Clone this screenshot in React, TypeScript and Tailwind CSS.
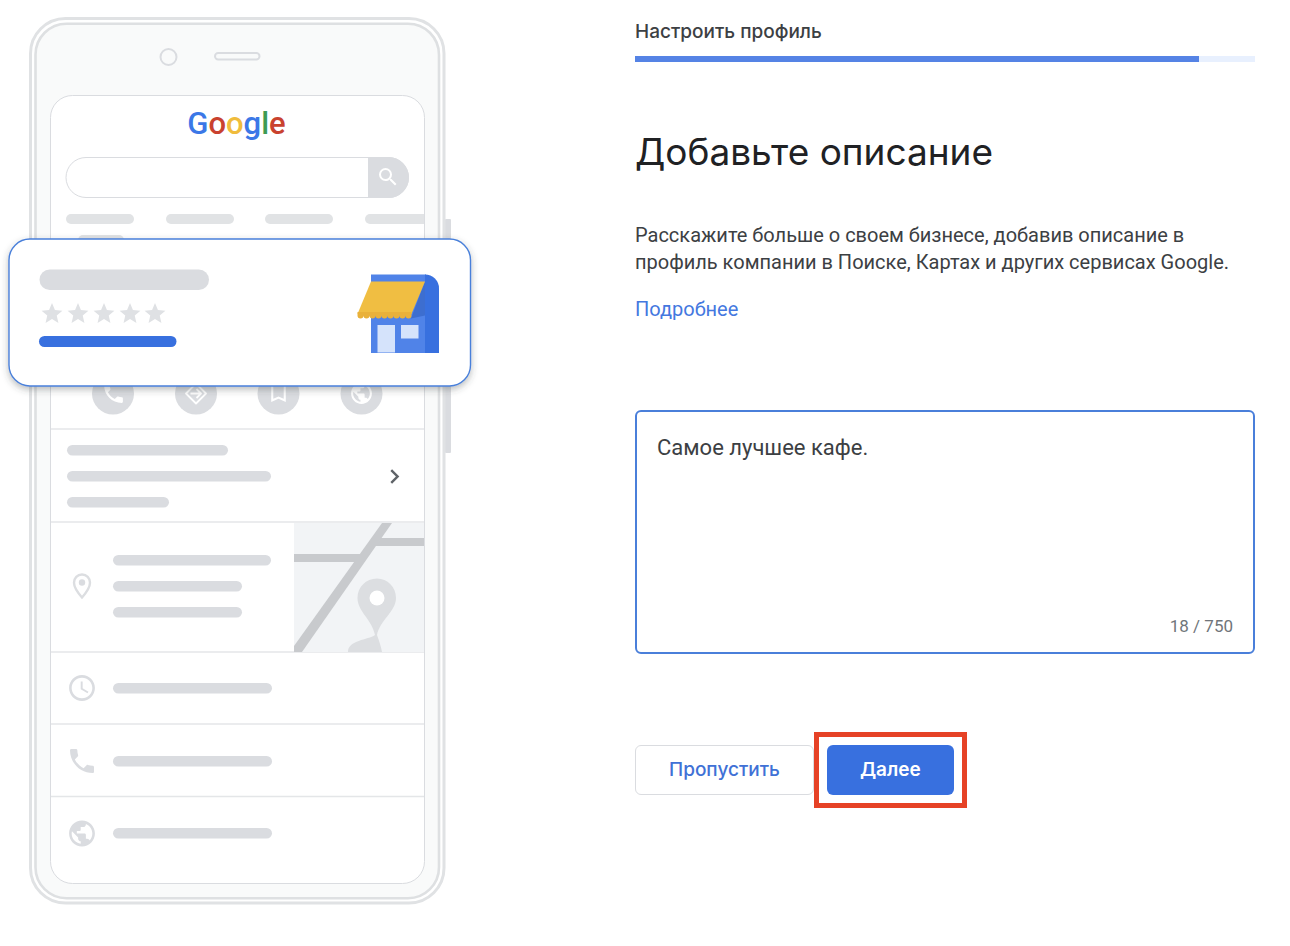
import { useState } from "react";
import {
    MdAccessTime,
    MdBookmarkBorder,
    MdChevronRight,
    MdPhone,
    MdPublic,
    MdSearch,
    MdStar,
} from "react-icons/md";

const MAX_LENGTH = 750;

// Placeholder lines on the phone screen
const lines = [
    { x: 67, y: 445, width: 161 },
    { x: 67, y: 471, width: 204 },
    { x: 67, y: 497, width: 102 },
    { x: 113, y: 555, width: 158 },
    { x: 113, y: 581, width: 129 },
    { x: 113, y: 607, width: 129 },
    { x: 113, y: 683, width: 159 },
    { x: 113, y: 756, width: 159 },
    { x: 113, y: 828, width: 159 },
];

const PhoneIllustration = () => (
    <svg viewBox="0 0 480 920" className="w-full" aria-hidden="true">
        <defs>
            <clipPath id="screen">
                <rect x="51" y="96" width="373" height="787" rx="22" />
            </clipPath>
            <filter id="shadow" x="-10%" y="-20%" width="120%" height="150%">
                <feDropShadow dx="0" dy="3" stdDeviation="3.5" floodColor="#3c4043" floodOpacity="0.35" />
            </filter>
        </defs>

        {/* Phone body */}
        <rect x="445" y="219" width="6" height="234" rx="1" fill="#dadce0" />
        <rect x="30.5" y="18.5" width="413.5" height="884.5" rx="35" fill="#fff" stroke="#e0e2e4" strokeWidth="3" />
        <rect x="35.5" y="23.7" width="403.5" height="874.5" rx="31" fill="#f9fafa" stroke="#dee0e2" strokeWidth="2.6" />
        <circle cx="168.5" cy="57" r="8" fill="none" stroke="#dadce0" strokeWidth="2" />
        <rect x="215" y="53" width="44.5" height="6.5" rx="3.2" fill="none" stroke="#dadce0" strokeWidth="2" />
        <rect x="50.5" y="95.5" width="374" height="788" rx="22" fill="#fff" stroke="#dadce0" />

        {/* Search */}
        <text
            x="236.5"
            y="134"
            textAnchor="middle"
            fontSize="31"
            fontWeight="500"
            fontFamily="Roboto, sans-serif"
        >
            <tspan fill="#3b78e7">G</tspan>
            <tspan fill="#c9422f">o</tspan>
            <tspan fill="#f0bc3c">o</tspan>
            <tspan fill="#3b78e7">g</tspan>
            <tspan fill="#3e9b54">l</tspan>
            <tspan fill="#c9422f">e</tspan>
        </text>
        <rect x="66" y="157.5" width="342.5" height="40" rx="20" fill="#fff" stroke="#dadce0" />
        <path d="M368 157h20.5a20.5 20.5 0 0 1 0 41H368z" fill="#dadce0" />
        <MdSearch x="376" y="165" size={24} color="#fff" />

        <g clipPath="url(#screen)">
            {[66, 166, 265, 365].map((x) => (
                <rect key={x} x={x} y="214" width="68" height="10" rx="5" fill="#e1e3e5" />
            ))}
            <rect x="78" y="235" width="46" height="10" rx="5" fill="#e1e3e5" />

            {/* Quick actions */}
            {[113, 196, 278.5, 361.5].map((cx) => (
                <circle key={cx} cx={cx} cy="393.5" r="21" fill="#dadce0" />
            ))}
            <MdPhone x="101" y="381" size={25} color="#fff" />
            <g fill="none" stroke="#fff" strokeWidth="1.8" strokeLinejoin="round">
                <path d="M196 383.5l10 10-10 10-10-10z" />
                <path d="M190.5 393.5h10M196.500 389l4.500 4.500-4.500 4.500" />
            </g>
            <MdBookmarkBorder x="266" y="380" size={25} color="#fff" />
            <MdPublic x="349" y="381" size={25} color="#fff" />

            {[429, 522, 652, 724, 796.5].map((y) => (
                <line key={y} x1="51" x2="424" y1={y} y2={y} stroke="#e4e6e8" strokeWidth="1.6" />
            ))}
            {lines.map((line) => (
                <rect key={line.y} {...line} height="10.6" rx="5.3" fill="#dadce0" />
            ))}

            {/* Map */}
            <rect x="294" y="523" width="130" height="129" fill="#f2f4f6" />
            <g fill="#c8cacd">
                <path d="M382 523h10L302 652h-8v-6z" />
                <path d="M294 554h69l-6 8h-63zM381 538h43v8h-49z" />
            </g>
            <path
                fill="#dcdee1"
                d="M377 578.5c-11 0-19.5 8.5-19.5 19.5 0 13.5 14.5 21.5 17.5 37-7 5-27 5-27 17h34c-1-6-3-11-5-17 3-15 19-23.5 19-37 0-11-8.5-19.5-19-19.5z"
            />
            <circle cx="377" cy="598" r="7.5" fill="#fff" />
        </g>

        <MdChevronRight x="380" y="462" size={29} color="#5f6368" />
        <path
            d="M82 574.5c-4.600 0-8 3.500-8 8.200 0 5.300 5 11.300 8 14.800 3-3.500 8-9.500 8-14.800 0-4.700-3.400-8.200-8-8.200z"
            fill="none"
            stroke="#dcdee1"
            strokeWidth="2.4"
        />
        <circle cx="82" cy="582.5" r="3.2" fill="#dadce0" />
        <MdAccessTime x="66.5" y="672.5" size={31} color="#dadce0" />
        <MdPhone x="66" y="745" size={32} color="#dadce0" />
        <MdPublic x="66.5" y="818" size={31} color="#dadce0" />

        {/* Business card */}
        <rect x="9" y="239" width="461.5" height="147" rx="21" fill="#fff" stroke="#4a80da" strokeWidth="1.4" filter="url(#shadow)" />
        <rect x="39.5" y="269.5" width="169.5" height="20.5" rx="10.2" fill="#dadce0" />
        {[52, 78, 104, 130, 155].map((cx) => (
            <MdStar key={cx} x={cx - 12.5} y={301} size={25} color="#dfe1e4" />
        ))}
        <rect x="39" y="336" width="137.5" height="11" rx="5.5" fill="#3870df" />

        {/* Store */}
        <path d="M371 274.5h55V353h-55z" fill="#5083e8" />
        <path d="M425 274.5a14 14 0 0 1 14 14V353h-14z" fill="#3870df" />
        <path d="M425 281.5v34l-14 3z" fill="#3d6ed0" />
        <path d="M377.5 325H395v27.5h-17.5zM401 325h17.5v13.5H401z" fill="#d5e3fb" />
        <path d="M371 281.5h54L411.5 314h-54z" fill="#f0be42" />
        <path
            d="M357.5 312h54v3.500a3 3 0 0 1-6 0a3 3 0 0 1-6 0a3 3 0 0 1-6 0a3 3 0 0 1-6 0a3 3 0 0 1-6 0a3 3 0 0 1-6 0a3 3 0 0 1-6 0a3 3 0 0 1-6 0a3 3 0 0 1-6 0z"
            fill="#e9b13a"
        />
    </svg>
);

const App = () => {
    const [description, setDescription] = useState("Самое лучшее кафе.");

    return (
        <div className="flex min-h-screen flex-col bg-white font-[Roboto,sans-serif] text-[#3c4043] lg:flex-row">
            <div className="w-full max-w-[480px] shrink-0">
                <PhoneIllustration />
            </div>

            <main className="min-w-0 flex-1 px-9 pt-4 lg:pr-[35px] lg:pl-[155px]">
                {/* Progress */}
                <p id="step" className="font-[Inter,sans-serif] text-[19px] leading-8 font-medium">
                    Настроить профиль
                </p>
                <div
                    role="progressbar"
                    aria-labelledby="step"
                    aria-valuenow={91}
                    className="mt-2 h-1.5 bg-[#e8f0fe]"
                >
                    <div className="h-full w-[91%] bg-[#5583e5]" />
                </div>

                <h1 className="mt-16 font-[Inter,sans-serif] text-[37px] leading-[52px] text-[#202124]">
                    Добавьте описание
                </h1>
                <p className="mt-11 text-xl leading-[27px]">
                    Расскажите больше о своем бизнесе, добавив описание в профиль компании в Поиске, Картах и других
                    сервисах Google.
                </p>
                <a href="#" className="mt-5 inline-block text-xl leading-[27px] text-[#4478df]">
                    Подробнее
                </a>

                {/* Description */}
                <div className="mt-[87px] flex flex-col rounded-md border-2 border-[#4a7fda] px-5 pt-5 pb-3.5">
                    <textarea
                        aria-label="Описание"
                        maxLength={MAX_LENGTH}
                        value={description}
                        onChange={(e) => setDescription(e.target.value)}
                        className="h-[182px] w-full resize-none text-[22px] leading-8 outline-none"
                    />
                    <span className="text-right text-[17px] leading-6 text-[#70757a]">
                        {description.length} / {MAX_LENGTH}
                    </span>
                </div>

                {/* Buttons */}
                <div className="mt-[78px] flex items-center font-[Inter,sans-serif] text-[19px] font-medium">
                    <button className="h-[50px] rounded-md border border-[#dadce0] px-[33px] text-[#4071d6]">
                        Пропустить
                    </button>
                    <div className="border-[5px] border-[#e64226] p-2">
                        <button className="h-[50px] rounded-md bg-[#3870df] px-[33px] font-semibold text-white">
                            Далее
                        </button>
                    </div>
                </div>
            </main>
        </div>
    );
};

export default App;
